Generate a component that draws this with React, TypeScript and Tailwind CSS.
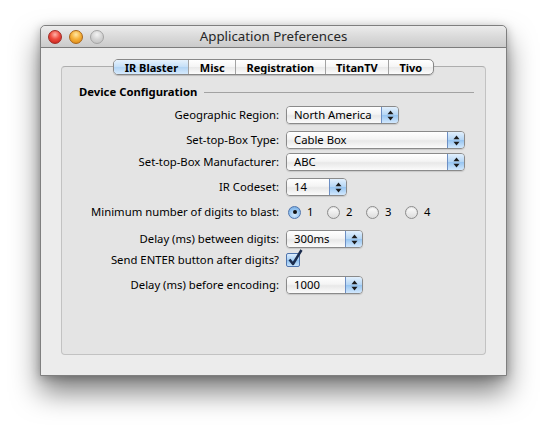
import React from "react";

function Arrows() {
  return (
    <svg width="7" height="11" viewBox="0 0 7 11">
      <path d="M3.5 0.5 L6.5 4.2 L0.5 4.2 Z" fill="#1b1b1b" />
      <path d="M3.5 10.5 L6.5 6.8 L0.5 6.8 Z" fill="#1b1b1b" />
    </svg>
  );
}

function Popup({ text, w }: { text: string; w: string }) {
  return (
    <div className={`${w} h-[18px] flex rounded-[4px] border border-[#8a8a8a] overflow-hidden shadow-[0_1px_1px_rgba(0,0,0,0.12)]`}>
      <div className="flex-1 flex items-center pl-[7px] bg-[linear-gradient(#ffffff,#f4f4f4_45%,#e8e8e8_55%,#fbfbfb)] text-[11.3px] leading-none text-black">
        {text}
      </div>
      <div className="w-[17px] border-l border-[#6d8fc4] bg-[linear-gradient(#e2f0fd,#b5d6f5_48%,#97c5f1_52%,#d2e8fd)] flex items-center justify-center">
        <Arrows />
      </div>
    </div>
  );
}

function Radio({ label, on }: { label: string; on?: boolean }) {
  return (
    <div className="w-[39px] flex items-center gap-[6px]">
      {on ? (
        <div className="w-[13px] h-[13px] rounded-full border border-[#4f74ad] bg-[radial-gradient(circle_at_50%_70%,#d4e9fc,#8fc0ef_60%,#6b9fd6)] flex items-center justify-center">
          <div className="w-[4px] h-[4px] rounded-full bg-[#111]" />
        </div>
      ) : (
        <div className="w-[13px] h-[13px] rounded-full border border-[#8c8c8c] bg-[linear-gradient(#ffffff,#ededed_50%,#dcdcdc)] shadow-[inset_0_1px_1px_rgba(0,0,0,0.12)]" />
      )}
      <span className="text-[11.3px] leading-none text-black">{label}</span>
    </div>
  );
}

function Row({ label, mt, children }: { label: string; mt: string; children: React.ReactNode }) {
  return (
    <div className={`flex items-center h-[18px] ${mt}`}>
      <div className="w-[217px] text-right text-[11.3px] leading-none text-black whitespace-nowrap">{label}</div>
      <div className="ml-[7px] flex items-center">{children}</div>
    </div>
  );
}

export default function App() {
  const tabs = ["IR Blaster", "Misc", "Registration", "TitanTV", "Tivo"];
  return (
    <div className="w-[546px] h-[430px] bg-white pl-[40px] pt-[25px] font-['Noto_Sans','DejaVu_Sans',sans-serif]">
      <div className="w-[467px] h-[351px] flex flex-col border border-[#7f7f7f] rounded-t-[5px] bg-[#ececec] shadow-[0_16px_28px_rgba(0,0,0,0.5),0_2px_10px_rgba(0,0,0,0.25)]">
        {/* title bar */}
        <div className="h-[22px] shrink-0 grid grid-cols-[1fr_auto_1fr] items-center rounded-t-[5px] border-b border-[#7c7c7c] bg-[linear-gradient(#ececec,#dadada_50%,#cbcbcb)]">
          <div className="flex items-center gap-[7px] pl-[7px]">
            <div className="w-[14px] h-[14px] rounded-full border border-[#9e2b25] bg-[radial-gradient(circle_at_50%_30%,#ffb3a8,#ef4b3f_45%,#c01c14)]" />
            <div className="w-[14px] h-[14px] rounded-full border border-[#a8661a] bg-[radial-gradient(circle_at_50%_30%,#ffe7a3,#f6b23c_45%,#d8800c)]" />
            <div className="w-[14px] h-[14px] rounded-full border border-[#a4a4a4] bg-[radial-gradient(circle_at_50%_30%,#f3f3f3,#d3d3d3_50%,#bdbdbd)]" />
          </div>
          <div className="text-[13.3px] leading-none text-[#262626]">Application Preferences</div>
          <div />
        </div>
        {/* body */}
        <div className="flex-1 flex flex-col px-[20px] pt-[11px] pb-[20px]">
          <div className="flex justify-center relative z-10">
            <div className="flex h-[16px] rounded-[5px] border border-[#878787] overflow-hidden bg-[linear-gradient(#ffffff,#f5f5f5_50%,#e9e9e9_52%,#fcfcfc)] shadow-[0_1px_1px_rgba(0,0,0,0.18)]">
              {tabs.map((t, i) => (
                <div
                  key={t}
                  className={`px-[10.4px] flex items-center text-[11px] leading-none font-bold text-black ${i > 0 ? "border-l border-[#a3a3a3]" : ""} ${i === 0 ? "bg-[linear-gradient(#e6f2fd,#c6e0f8_48%,#b2d4f4_52%,#d6eafd)]" : ""}`}
                >
                  {t}
                </div>
              ))}
            </div>
          </div>
          <div className="-mt-[9px] flex-1 rounded-[4px] border border-[#c2c2c2] border-t-[#adadad] bg-[#e4e4e4] pt-[17px] flex flex-col">
            <div className="h-[16px] flex items-center pl-[17px] pr-[11px] gap-[7px]">
              <span className="text-[11.3px] leading-none font-bold text-black whitespace-nowrap">Device Configuration</span>
              <div className="flex-1 h-px bg-[#a2a2a2]" />
            </div>
            <Row label="Geographic Region:" mt="mt-[6px]">
              <Popup text="North America" w="w-[113px]" />
            </Row>
            <Row label="Set-top-Box Type:" mt="mt-[7px]">
              <Popup text="Cable Box" w="w-[179px]" />
            </Row>
            <Row label="Set-top-Box Manufacturer:" mt="mt-[4px]">
              <Popup text="ABC" w="w-[179px]" />
            </Row>
            <Row label="IR Codeset:" mt="mt-[7px]">
              <Popup text="14" w="w-[61px]" />
            </Row>
            <Row label="Minimum number of digits to blast:" mt="mt-[7px]">
              <div className="flex items-center pl-[2px]">
                <Radio label="1" on />
                <Radio label="2" />
                <Radio label="3" />
                <Radio label="4" />
              </div>
            </Row>
            <Row label="Delay (ms) between digits:" mt="mt-[9px]">
              <Popup text="300ms" w="w-[77px]" />
            </Row>
            <Row label="Send ENTER button after digits?" mt="mt-[3px]">
              <div className="relative w-[14px] h-[14px] rounded-[2px] border border-[#4f74ad] bg-[linear-gradient(#dcedfd,#a9d0f4_50%,#8dbfee_52%,#c5e2fc)]">
                <svg className="absolute -top-[5px] left-[1px]" width="15" height="17" viewBox="0 0 15 17">
                  <path d="M1.5 10.5 L5 15 L13.5 1" fill="none" stroke="#1b2c4d" strokeWidth="2.5" strokeLinejoin="round" />
                </svg>
              </div>
            </Row>
            <Row label="Delay (ms) before encoding:" mt="mt-[7px]">
              <Popup text="1000" w="w-[77px]" />
            </Row>
          </div>
        </div>
      </div>
    </div>
  );
}
